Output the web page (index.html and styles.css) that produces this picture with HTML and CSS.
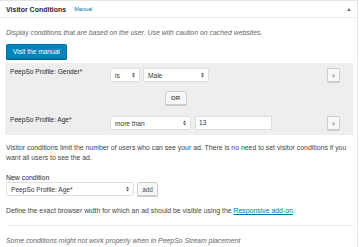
FILE: index.html
```html
<!DOCTYPE html>
<html>
<head>
<meta charset="utf-8">
<link rel="stylesheet" href="styles.css">
</head>
<body>
<div class="panel">
  <div class="panel-head">
    <h2 class="title">Visitor Conditions</h2>
    <a class="manual" href="#">Manual</a>
    <svg class="toggle" width="4" height="3" viewBox="0 0 4 3"><polygon points="0,3 2,0 4,3" fill="#72777c"/></svg>
  </div>
  <div class="panel-body">
    <p class="desc">Display conditions that are based on the user. Use with caution on cached websites.</p>
    <a class="btn-primary" href="#">Visit the manual</a>
    <div class="conditions">
      <div class="cond-row">
        <div class="cond-label">PeepSo Profile: Gender*</div>
        <div class="cond-controls">
          <div class="sel sel-is"><span>is</span><svg width="3" height="6" viewBox="0 0 3 6"><polygon points="0,2.4 1.5,0.4 3,2.4" fill="#555"/><polygon points="0,3.6 1.5,5.6 3,3.6" fill="#555"/></svg></div>
          <div class="sel sel-male"><span>Male</span><svg width="3" height="6" viewBox="0 0 3 6"><polygon points="0,2.4 1.5,0.4 3,2.4" fill="#555"/><polygon points="0,3.6 1.5,5.6 3,3.6" fill="#555"/></svg></div>
        </div>
        <button class="btn-x">x</button>
      </div>
      <div class="or-row"><button class="btn-or">OR</button></div>
      <div class="cond-row">
        <div class="cond-label">PeepSo Profile: Age*</div>
        <div class="cond-controls">
          <div class="sel sel-more"><span>more than</span><svg width="3" height="6" viewBox="0 0 3 6"><polygon points="0,2.4 1.5,0.4 3,2.4" fill="#555"/><polygon points="0,3.6 1.5,5.6 3,3.6" fill="#555"/></svg></div>
          <div class="inp">13</div>
        </div>
        <button class="btn-x">x</button>
      </div>
    </div>
    <p class="info">Visitor conditions limit the number of users who can see your ad. There is no need to set visitor conditions if you want all users to see the ad.</p>
    <div class="new-label">New condition</div>
    <div class="new-row">
      <div class="sel sel-new"><span>PeepSo Profile: Age*</span><svg width="3" height="6" viewBox="0 0 3 6"><polygon points="0,2.4 1.5,0.4 3,2.4" fill="#555"/><polygon points="0,3.6 1.5,5.6 3,3.6" fill="#555"/></svg></div>
      <button class="btn-add">add</button>
    </div>
    <p class="define">Define the exact browser width for which an ad should be visible using the <a href="#">Responsive add-on</a>.</p>
    <hr class="sep">
    <p class="note">Some conditions might not work properly when in PeepSo Stream placement</p>
  </div>
</div>
</body>
</html>
```
FILE: styles.css
```css
* { box-sizing: border-box; }
html, body { margin: 0; padding: 0; background: #fff; }
body {
  font-family: "Liberation Sans", Arial, sans-serif;
  font-size: 6.9px;
  color: #444;
  width: 359px;
  height: 247px;
  overflow: hidden;
}
.panel {
  width: 358px;
  height: 247px;
  overflow: hidden;
  border-top: 1px solid #e5e5e5;
  border-right: 1px solid #e5e5e5;
}
.panel-head {
  height: 17px;
  border-bottom: 1px solid #eee;
  display: flex;
  align-items: center;
  padding-left: 6px;
  padding-right: 6px;
}
.title {
  margin: 0;
  font-size: 7px;
  font-weight: bold;
  color: #23282d;
}
.manual {
  margin-left: 8px;
  font-size: 5.5px;
  color: #0073aa;
  text-decoration: none;
}
.toggle { margin-left: auto; }
.panel-body { padding: 10px 4px 0 5px; }
p { margin: 0; }
.desc {
  font-style: italic;
  color: #666;
  line-height: 9px;
  padding-left: 1px;
}
.btn-primary {
  display: inline-block;
  margin-top: 7px;
  margin-left: 1px;
  height: 15px;
  line-height: 13px;
  padding: 0 6px;
  background: #0085ba;
  border: 1px solid #0073aa;
  border-radius: 1.5px;
  box-shadow: 0 1px 0 #006799;
  color: #fff;
  text-decoration: none;
  font-size: 6.6px;
}
.conditions {
  margin-top: 4px;
  width: 348px;
  background: #eeeeee;
  padding: 5px 13px 5px 5px;
}
.cond-row {
  display: flex;
  align-items: flex-start;
  height: 14px;
}
.cond-label {
  width: 100px;
  line-height: 8px;
  color: #23282d;
  font-size: 6.6px;
}
.cond-controls { display: flex; gap: 3px; }
.sel {
  height: 14px;
  background: #fff;
  border: 1px solid #ddd;
  border-radius: 1.5px;
  display: flex;
  align-items: center;
  justify-content: space-between;
  padding: 0 4px;
  color: #32373c;
  font-size: 6.6px;
}
.sel-is { width: 30px; }
.sel-male { width: 66px; }
.sel-more { width: 81px; margin-right: 1px; }
.inp {
  width: 77px;
  height: 14px;
  background: #fff;
  border: 1px solid #ddd;
  line-height: 12px;
  padding-left: 3px;
  color: #32373c;
  font-size: 6.6px;
}
.btn-x {
  margin-left: auto;
  width: 13px;
  height: 14px;
  padding: 0;
  border: 1px solid #ccc;
  border-radius: 1.5px;
  background: #f7f7f7;
  box-shadow: 0 1px 0 #ccc;
  font-family: "DejaVu Serif", serif;
  font-size: 5px;
  color: #555;
  line-height: 11px;
}
.or-row {
  margin-top: 9px;
  height: 14px;
  display: flex;
  justify-content: center;
  padding-left: 1px;
}
.btn-or {
  width: 22px;
  height: 14px;
  padding: 0;
  border: 1px solid #ccc;
  border-radius: 1.5px;
  background: #f7f7f7;
  box-shadow: 0 1px 0 #ccc;
  font-family: "Liberation Sans", Arial, sans-serif;
  font-size: 6px;
  font-weight: bold;
  color: #555;
}
.or-row + .cond-row { margin-top: 11px; }
.info {
  margin-top: 8px;
  line-height: 10px;
  padding-left: 1px;
}
.new-label {
  margin-top: 10px;
  line-height: 9px;
  padding-left: 1px;
  color: #23282d;
}
.new-row {
  display: flex;
  gap: 3px;
  margin-left: 1px;
}
.sel-new { width: 128px; }
.btn-add {
  height: 14px;
  width: 21px;
  padding: 0;
  border: 1px solid #ccc;
  border-radius: 1.5px;
  background: #f7f7f7;
  box-shadow: 0 1px 0 #ccc;
  font-family: "Liberation Sans", Arial, sans-serif;
  font-size: 6.4px;
  color: #555;
}
.define {
  margin-top: 10px;
  line-height: 9px;
  padding-left: 1px;
}
.define a { color: #0073aa; }
.sep {
  margin: 10px 0 0 1px;
  width: 347px;
  border: none;
  border-top: 1px solid #eee;
  height: 0;
}
.note {
  margin-top: 10px;
  line-height: 9px;
  font-style: italic;
  color: #666;
  padding-left: 1px;
}
```
